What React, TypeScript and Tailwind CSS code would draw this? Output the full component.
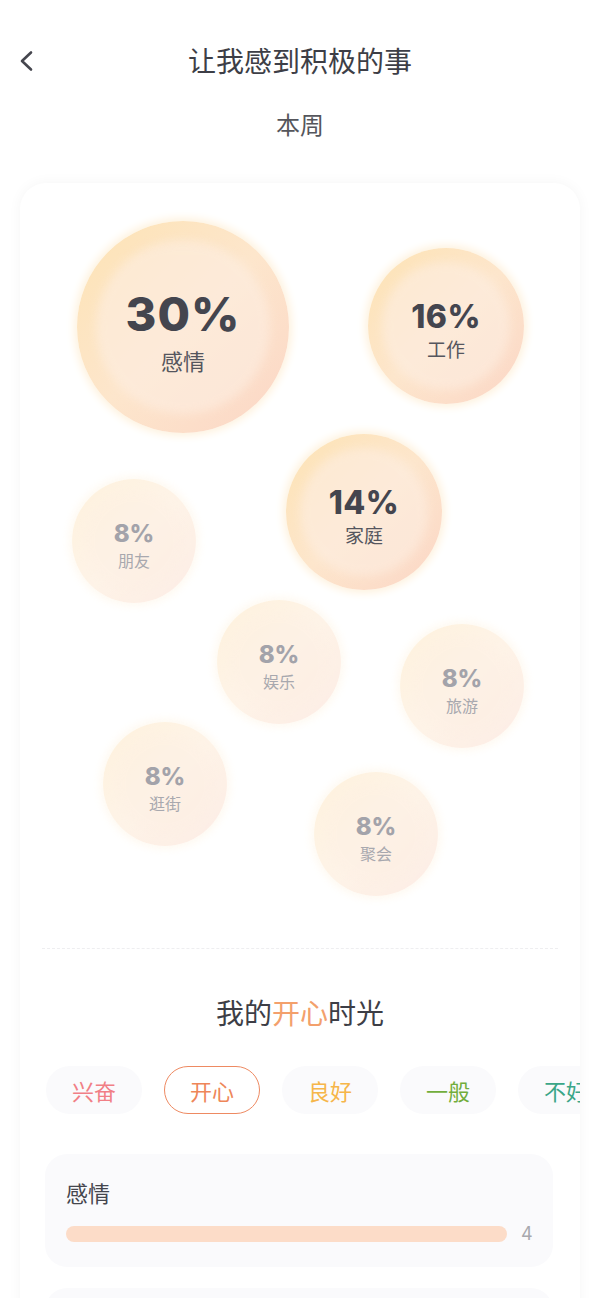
const bubbles = [
  { pct: "30%", label: "感情", d: 212, left: 57, top: 38, size: "big" },
  { pct: "16%", label: "工作", d: 156, left: 348, top: 65, size: "mid" },
  { pct: "14%", label: "家庭", d: 156, left: 266, top: 251, size: "mid" },
  { pct: "8%", label: "朋友", d: 124, left: 52, top: 296, size: "small" },
  { pct: "8%", label: "娱乐", d: 124, left: 197, top: 417, size: "small" },
  { pct: "8%", label: "旅游", d: 124, left: 380, top: 441, size: "small" },
  { pct: "8%", label: "逛街", d: 124, left: 83, top: 539, size: "small" },
  { pct: "8%", label: "聚会", d: 124, left: 294, top: 589, size: "small" },
];

const moods = [
  { name: "兴奋", color: "text-[#f17f86]", active: false },
  { name: "开心", color: "text-[#ee8659]", active: true },
  { name: "良好", color: "text-[#f6b64a]", active: false },
  { name: "一般", color: "text-[#72ad3c]", active: false },
  { name: "不好", color: "text-[#3ba688]", active: false },
];

function Bubble({ b }: { b: (typeof bubbles)[number] }) {
  const faded = b.size === "small";
  return (
    <div
      className="absolute rounded-full"
      style={{ left: b.left, top: b.top, width: b.d, height: b.d }}
    >
      {/* glow + body */}
      <div
        className={
          "absolute inset-0 rounded-full bg-linear-to-br from-[#fde3b4] via-[#fde6cc] to-[#fbd6c6] shadow-[0_0_9px_3px_#fef2de] " +
          (faded ? "opacity-45" : "")
        }
      />
      <div
        className={
          "absolute inset-[9%] rounded-full bg-[#fdeee2] blur-[5px] " +
          (faded ? "opacity-30" : "opacity-60")
        }
      />
      <div className="relative flex h-full flex-col items-center justify-center pt-[7px]">
        {b.size === "big" && (
          <>
            <span className="font-['Inter',sans-serif] text-[47px] leading-[52px] font-extrabold tracking-[1px] text-[#44454e]">
              {b.pct}
            </span>
            <span className="mt-[6px] text-[22px] leading-[28px] text-[#55565e]">{b.label}</span>
          </>
        )}
        {b.size === "mid" && (
          <>
            <span className="font-['Inter',sans-serif] text-[32px] leading-[36px] font-extrabold tracking-[0.5px] text-[#44454e]">
              {b.pct}
            </span>
            <span className="mt-[2px] text-[19px] leading-[24px] text-[#55565e]">{b.label}</span>
          </>
        )}
        {b.size === "small" && (
          <>
            <span className="font-['Inter',sans-serif] text-[24px] leading-[28px] font-extrabold text-[#a3a3aa]">
              {b.pct}
            </span>
            <span className="mt-[2px] text-[16px] leading-[20px] text-[#a8a8ae]">{b.label}</span>
          </>
        )}
      </div>
    </div>
  );
}

export default function App() {
  return (
    <div className="min-h-screen bg-white font-['Noto_Sans_CJK_SC','Noto_Sans',sans-serif] text-[#3b3c44]">
      {/* Header */}
      <div className="relative mt-[32px] flex h-[56px] items-center justify-center">
        <svg
          className="absolute left-[18px] top-[18px]"
          width="20"
          height="22"
          viewBox="0 0 20 22"
          fill="none"
        >
          <polyline
            points="13,2.5 4,11 13,19.5"
            stroke="#45464e"
            strokeWidth="2.6"
            strokeLinecap="round"
            strokeLinejoin="round"
          />
        </svg>
        <h1 className="text-[28px] leading-[36px] font-normal text-[#3d3e46]">让我感到积极的事</h1>
      </div>
      <p className="mt-[20px] text-center text-[24px] leading-[32px] text-[#55565c]">本周</p>

      {/* Card */}
      <div className="mx-[20px] mt-[43px] overflow-hidden rounded-[26px] bg-white shadow-[0_0_14px_rgba(0,0,0,0.045)]">
        <div className="relative h-[765px]">
          {bubbles.map((b) => (
            <Bubble key={b.label} b={b} />
          ))}
        </div>

        <div className="mx-[22px] border-t border-dashed border-[#eeeef0]" />

        <h2 className="mt-[43px] text-center text-[28px] leading-[40px] font-normal text-[#3d3e46]">
          我的<span className="text-[#f3a06c]">开心</span>时光
        </h2>

        <div className="mt-[34px] flex gap-[22px] pl-[26px]">
          {moods.map((m) => (
            <div
              key={m.name}
              className={
                "flex h-[48px] w-[96px] shrink-0 items-center justify-center rounded-full text-[22px] " +
                m.color +
                (m.active ? " border-[1.5px] border-[#ee8a62] bg-white" : " bg-[#fafafc]")
              }
            >
              {m.name}
            </div>
          ))}
        </div>

        <div className="ml-[25px] mt-[40px] w-[508px] rounded-[22px] bg-[#fafafc] pb-[25px] pl-[21px] pr-[20px] pt-[23px]">
          <p className="text-[22px] leading-[30px] text-[#45464e]">感情</p>
          <div className="mt-[19px] flex items-center gap-[14px]">
            <div className="h-[16px] flex-1 rounded-full bg-[#fcdcc8]" />
            <span className="w-[12px] font-['Inter',sans-serif] text-[18px] leading-[16px] text-[#a8a8ae]">4</span>
          </div>
        </div>

        <div className="ml-[25px] mt-[21px] h-[100px] w-[508px] rounded-[22px] bg-[#fafafc]" />
      </div>
    </div>
  );
}
